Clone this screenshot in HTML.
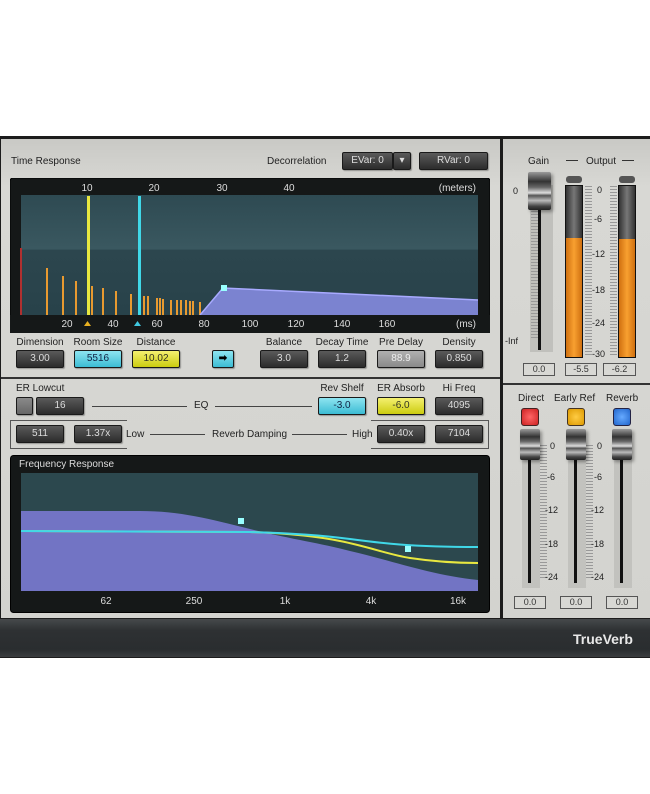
<!DOCTYPE html>
<html><head><meta charset="utf-8"><style>
*{margin:0;padding:0;box-sizing:border-box}
body{width:650px;height:794px;background:#fff;position:relative;overflow:hidden;font-family:"Liberation Sans",sans-serif;font-size:10px;color:#222}
.a{position:absolute}
.lbl{position:absolute;font-size:10px;color:#222;text-align:center;white-space:nowrap}
.btn{position:absolute;height:18px;border-radius:2px;background:linear-gradient(#5a5a5a,#2c2c2c);border:1px solid #1a1a1a;color:#ddd;font-size:10px;text-align:center;line-height:16px;box-shadow:1px 1px 1px rgba(0,0,0,.3)}
.cy{background:linear-gradient(#8ee4f0,#3cbcd4);color:#124;}
.yl{background:linear-gradient(#f4f070,#cccc10);color:#332;}
.gr{background:linear-gradient(#b0b0b0,#8a8a8a);color:#eee}
.vb{position:absolute;height:13px;border:1px solid #555;background:#d8d8d4;font-size:9px;line-height:11px;text-align:center;color:#333}
.sc{position:absolute;font-size:9px;color:#222}
.tk{position:absolute;width:7px;background:repeating-linear-gradient(#999 0,#999 1px,transparent 1px,transparent 3px)}
.hnd{position:absolute;width:22px;height:31px;border-radius:2px;background:linear-gradient(#9a9a9a 0,#333 25%,#666 40%,#ddd 55%,#555 62%,#bbb 75%,#444 90%,#222 100%);box-shadow:2px 2px 3px rgba(0,0,0,.35)}
</style></head><body>
<div class="a" style="left:0;top:136px;width:650px;height:522px;background:#1c1c1c"></div>
<div class="a" style="left:1px;top:139px;width:499px;height:479px;background:linear-gradient(#c9c9c5,#d8d8d4 10%,#d3d3cf)"></div>
<div class="a" style="left:503px;top:139px;width:147px;height:479px;background:linear-gradient(#c9c9c5,#d8d8d4 10%,#d3d3cf)"></div>
<div class="a" style="left:1px;top:377px;width:499px;height:2px;background:#333"></div>
<div class="a" style="left:503px;top:383px;width:147px;height:2px;background:#333"></div>
<div class="a" style="left:0;top:619px;width:650px;height:38px;background:linear-gradient(#46494b,#2e3133 30%,#2a2d2f 80%,#3a3d3f)"></div>
<div class="a" style="left:573px;top:631px;font-size:14px;font-weight:bold;color:#e8e8e8">TrueVerb</div>

<div class="lbl" style="left:11px;top:156px">Time Response</div>
<div class="lbl" style="left:267px;top:156px">Decorrelation</div>
<div class="btn" style="left:342px;top:152px;width:51px;text-align:center">EVar: 0</div>
<div class="btn" style="left:393px;top:152px;width:18px">▾</div>
<div class="btn" style="left:419px;top:152px;width:69px">RVar: 0</div>

<svg class="a" style="left:10px;top:178px" width="480" height="155">
<rect x="0" y="0" width="480" height="155" rx="3" fill="#151818" stroke="#000"/>
<defs><linearGradient id="g1" x1="0" y1="0" x2="0" y2="1"><stop offset="0" stop-color="#2e4a52"/><stop offset=".45" stop-color="#3a5860"/><stop offset=".46" stop-color="#2c464e"/><stop offset="1" stop-color="#28424a"/></linearGradient></defs>
<rect x="11" y="17" width="457" height="120" fill="url(#g1)"/>
<text x="77" y="13" fill="#ddd" font-size="10" text-anchor="middle" font-family="Liberation Sans">10</text>
<text x="144" y="13" fill="#ddd" font-size="10" text-anchor="middle" font-family="Liberation Sans">20</text>
<text x="212" y="13" fill="#ddd" font-size="10" text-anchor="middle" font-family="Liberation Sans">30</text>
<text x="279" y="13" fill="#ddd" font-size="10" text-anchor="middle" font-family="Liberation Sans">40</text>
<text x="466" y="13" fill="#ddd" font-size="10" text-anchor="end" font-family="Liberation Sans">(meters)</text>
<rect x="10" y="70" width="2" height="67" fill="#b03030"/>
<g fill="#e89a30">
<rect x="36" y="90" width="2" height="47"/><rect x="52" y="98" width="2" height="39"/><rect x="65" y="103" width="2" height="34"/>
<rect x="81" y="108" width="2" height="29"/><rect x="92" y="110" width="2" height="27"/><rect x="105" y="113" width="2" height="24"/>
<rect x="120" y="116" width="2" height="21"/><rect x="133" y="118" width="2" height="19"/><rect x="137" y="118" width="2" height="19"/>
<rect x="146" y="120" width="2" height="17"/><rect x="149" y="120" width="2" height="17"/><rect x="152" y="121" width="2" height="16"/>
<rect x="160" y="122" width="2" height="15"/><rect x="166" y="122" width="2" height="15"/><rect x="170" y="122" width="2" height="15"/>
<rect x="175" y="122" width="2" height="15"/><rect x="179" y="123" width="2" height="14"/><rect x="182" y="123" width="2" height="14"/><rect x="189" y="124" width="2" height="13"/>
</g>
<rect x="77" y="18" width="3" height="119" fill="#e8e840"/>
<rect x="128" y="18" width="3" height="119" fill="#40d8e8"/>
<polygon points="190,137 213,110 468,122 468,137" fill="#8a8ee8" opacity=".85"/>
<polyline points="190,137 213,110 468,122" fill="none" stroke="#a8aaff" stroke-width="1.5"/>
<rect x="211" y="107" width="6" height="6" fill="#9ff"/>
<rect x="0" y="137" width="480" height="18" fill="#151818"/>
<g fill="#ddd" font-size="10" font-family="Liberation Sans" text-anchor="middle">
<text x="57" y="149">20</text><text x="103" y="149">40</text><text x="147" y="149">60</text><text x="194" y="149">80</text>
<text x="240" y="149">100</text><text x="286" y="149">120</text><text x="332" y="149">140</text><text x="377" y="149">160</text>
<text x="466" y="149" text-anchor="end">(ms)</text></g>
<polygon points="74,148 81,148 77.5,143" fill="#e8b020"/>
<polygon points="124,148 131,148 127.5,143" fill="#40c8e0"/>
</svg>

<div class="lbl" style="left:16px;top:337px;width:48px">Dimension</div>
<div class="lbl" style="left:72px;top:337px;width:52px">Room Size</div>
<div class="lbl" style="left:132px;top:337px;width:48px">Distance</div>
<div class="lbl" style="left:260px;top:337px;width:48px">Balance</div>
<div class="lbl" style="left:314px;top:337px;width:56px">Decay Time</div>
<div class="lbl" style="left:375px;top:337px;width:52px">Pre Delay</div>
<div class="lbl" style="left:435px;top:337px;width:48px">Density</div>
<div class="btn" style="left:16px;top:350px;width:48px">3.00</div>
<div class="btn cy" style="left:74px;top:350px;width:48px">5516</div>
<div class="btn yl" style="left:132px;top:350px;width:48px">10.02</div>
<div class="btn cy" style="left:212px;top:350px;width:22px;font-weight:bold;color:#000">➡</div>
<div class="btn" style="left:260px;top:350px;width:48px">3.0</div>
<div class="btn" style="left:318px;top:350px;width:48px">1.2</div>
<div class="btn gr" style="left:377px;top:350px;width:48px">88.9</div>
<div class="btn" style="left:435px;top:350px;width:48px">0.850</div>

<div class="lbl" style="left:16px;top:383px">ER Lowcut</div>
<div class="lbl" style="left:318px;top:383px;width:48px">Rev Shelf</div>
<div class="lbl" style="left:377px;top:383px;width:48px">ER Absorb</div>
<div class="lbl" style="left:435px;top:383px;width:48px">Hi Freq</div>
<div class="btn gr" style="left:16px;top:397px;width:17px;background:linear-gradient(#8a8a8a,#666)"></div>
<div class="btn" style="left:36px;top:397px;width:48px">16</div>
<div class="a" style="left:92px;top:406px;width:95px;height:1px;background:#444"></div>
<div class="lbl" style="left:194px;top:400px">EQ</div>
<div class="a" style="left:215px;top:406px;width:97px;height:1px;background:#444"></div>
<div class="btn cy" style="left:318px;top:397px;width:48px">-3.0</div>
<div class="btn yl" style="left:377px;top:397px;width:48px">-6.0</div>
<div class="btn" style="left:435px;top:397px;width:48px">4095</div>

<div class="a" style="left:10px;top:420px;width:117px;height:29px;border:1px solid #555;border-right:none"></div>
<div class="a" style="left:371px;top:420px;width:118px;height:29px;border:1px solid #555;border-left:none"></div>
<div class="btn" style="left:16px;top:425px;width:48px">511</div>
<div class="btn" style="left:74px;top:425px;width:48px">1.37x</div>
<div class="lbl" style="left:126px;top:429px">Low</div>
<div class="a" style="left:150px;top:434px;width:55px;height:1px;background:#444"></div>
<div class="lbl" style="left:212px;top:429px">Reverb Damping</div>
<div class="a" style="left:292px;top:434px;width:55px;height:1px;background:#444"></div>
<div class="lbl" style="left:352px;top:429px">High</div>
<div class="btn" style="left:377px;top:425px;width:48px">0.40x</div>
<div class="btn" style="left:435px;top:425px;width:48px">7104</div>

<svg class="a" style="left:10px;top:455px" width="480" height="158">
<rect x="0.5" y="0.5" width="479" height="157" rx="3" fill="#151818" stroke="#000"/>
<rect x="11" y="18" width="457" height="118" fill="#2c484e"/>
<text x="9" y="12" fill="#ddd" font-size="10" font-family="Liberation Sans">Frequency Response</text>
<path d="M11,56 L130,56 C170,56 200,64 240,74 C280,84 310,88 340,96 C380,105 420,120 468,125 L468,136 L11,136 Z" fill="#7274c4"/>
<path d="M11,76 L240,77 C270,78 300,80 330,86 C360,92 380,100 400,103 C420,106 440,108 468,108" fill="none" stroke="#e8e840" stroke-width="2"/>
<path d="M11,76 L240,77 C280,78 310,80 340,84 C370,88 400,92 468,92" fill="none" stroke="#40d8e8" stroke-width="2"/>
<rect x="228" y="63" width="6" height="6" fill="#9ff"/>
<rect x="395" y="91" width="6" height="6" fill="#9ff"/>
<g fill="#ddd" font-size="10" font-family="Liberation Sans" text-anchor="middle">
<text x="96" y="149">62</text><text x="184" y="149">250</text><text x="275" y="149">1k</text><text x="361" y="149">4k</text><text x="448" y="149">16k</text></g>
</svg>

<div class="lbl" style="left:528px;top:156px">Gain</div>
<div class="a" style="left:566px;top:160px;width:12px;height:1px;background:#333"></div>
<div class="lbl" style="left:586px;top:156px">Output</div>
<div class="a" style="left:622px;top:160px;width:12px;height:1px;background:#333"></div>
<div class="a" style="left:530px;top:185px;width:23px;height:167px;background:#c0c0bc"></div>
<div class="tk" style="left:531px;top:190px;height:150px"></div>
<div class="a" style="left:538px;top:200px;width:3px;height:150px;background:#111"></div>
<div class="hnd" style="left:528px;top:172px;width:23px;height:38px"></div>
<div class="sc" style="left:513px;top:186px">0</div>
<div class="sc" style="left:505px;top:336px">-Inf</div>
<div class="a" style="left:566px;top:176px;width:16px;height:7px;border-radius:3px;background:#555"></div>
<div class="a" style="left:619px;top:176px;width:16px;height:7px;border-radius:3px;background:#555"></div>
<div class="a" style="left:565px;top:185px;width:18px;height:173px;background:linear-gradient(90deg,#333,#777 50%,#333);border:1px solid #111"></div>
<div class="a" style="left:566px;top:238px;width:16px;height:119px;background:linear-gradient(90deg,#d07010,#f8a030 50%,#d07010)"></div>
<div class="a" style="left:618px;top:185px;width:18px;height:173px;background:linear-gradient(90deg,#333,#777 50%,#333);border:1px solid #111"></div>
<div class="a" style="left:619px;top:239px;width:16px;height:118px;background:linear-gradient(90deg,#d07010,#f8a030 50%,#d07010)"></div>
<div class="tk" style="left:585px;top:186px;height:170px"></div>
<div class="tk" style="left:610px;top:186px;height:170px"></div>
<div class="sc" style="left:597px;top:185px">0</div>
<div class="sc" style="left:594px;top:214px">-6</div>
<div class="sc" style="left:592px;top:249px">-12</div>
<div class="sc" style="left:592px;top:285px">-18</div>
<div class="sc" style="left:592px;top:318px">-24</div>
<div class="sc" style="left:592px;top:349px">-30</div>
<div class="vb" style="left:523px;top:363px;width:32px">0.0</div>
<div class="vb" style="left:565px;top:363px;width:32px">-5.5</div>
<div class="vb" style="left:603px;top:363px;width:33px">-6.2</div>

<div class="lbl" style="left:518px;top:393px">Direct</div>
<div class="lbl" style="left:554px;top:393px">Early Ref</div>
<div class="lbl" style="left:606px;top:393px">Reverb</div>
<div class="a" style="left:521px;top:408px;width:18px;height:18px;border-radius:3px;background:radial-gradient(#f66,#c22);border:1px solid #422"></div>
<div class="a" style="left:567px;top:408px;width:18px;height:18px;border-radius:3px;background:radial-gradient(#fc4,#d90);border:1px solid #432"></div>
<div class="a" style="left:613px;top:408px;width:18px;height:18px;border-radius:3px;background:radial-gradient(#6af,#26c);border:1px solid #224"></div>
<div class="a" style="left:522px;top:440px;width:18px;height:148px;background:#c2c2be"></div>
<div class="a" style="left:568px;top:440px;width:18px;height:148px;background:#c2c2be"></div>
<div class="a" style="left:614px;top:440px;width:18px;height:148px;background:#c2c2be"></div>
<div class="tk" style="left:540px;top:445px;height:135px"></div>
<div class="tk" style="left:586px;top:445px;height:135px"></div>
<div class="a" style="left:528px;top:450px;width:3px;height:133px;background:#111"></div>
<div class="a" style="left:574px;top:450px;width:3px;height:133px;background:#111"></div>
<div class="a" style="left:620px;top:450px;width:3px;height:133px;background:#111"></div>
<div class="hnd" style="left:520px;top:429px;width:20px"></div>
<div class="hnd" style="left:566px;top:429px;width:20px"></div>
<div class="hnd" style="left:612px;top:429px;width:20px"></div>
<div class="sc" style="left:550px;top:441px">0</div><div class="sc" style="left:597px;top:441px">0</div>
<div class="sc" style="left:547px;top:472px">-6</div><div class="sc" style="left:594px;top:472px">-6</div>
<div class="sc" style="left:545px;top:505px">-12</div><div class="sc" style="left:591px;top:505px">-12</div>
<div class="sc" style="left:545px;top:539px">-18</div><div class="sc" style="left:591px;top:539px">-18</div>
<div class="sc" style="left:545px;top:572px">-24</div><div class="sc" style="left:591px;top:572px">-24</div>
<div class="vb" style="left:514px;top:596px;width:32px">0.0</div>
<div class="vb" style="left:560px;top:596px;width:32px">0.0</div>
<div class="vb" style="left:606px;top:596px;width:32px">0.0</div>
</body></html>
